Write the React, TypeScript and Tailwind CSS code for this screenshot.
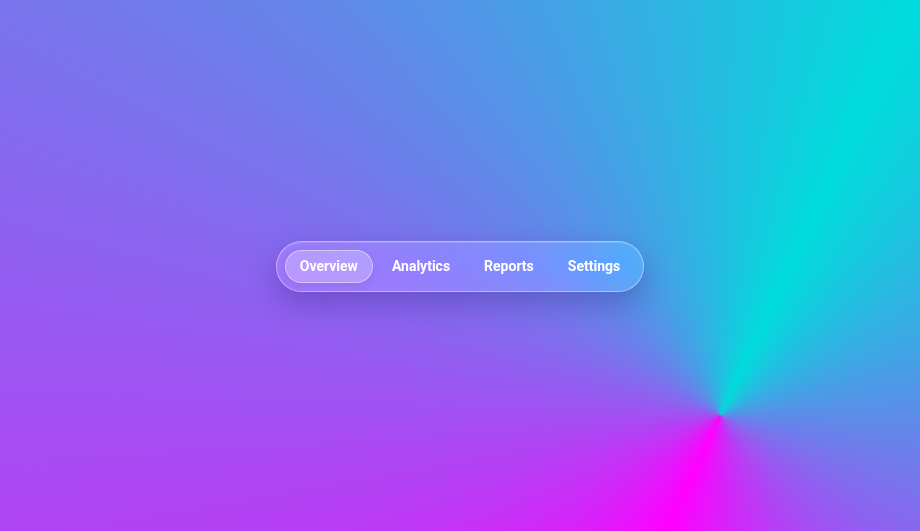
import { useState } from "react";

const tabs = ["Overview", "Analytics", "Reports", "Settings"];

const App = () => {
  const [active, setActive] = useState("Overview");

  return (
    <div
      className="h-[531px] w-full flex items-center justify-center bg-[conic-gradient(from_205deg_at_78.3%_78.2%,#ff00ff,#00dcdc,#ff00ff)]"
      style={{ fontFamily: "Roboto, Inter, 'Noto Sans', sans-serif" }}
    >
      {/* Glass nav */}
      <nav className="mt-px flex items-center gap-1 p-2 rounded-full border border-white/40 bg-white/15 backdrop-blur-md backdrop-saturate-150 shadow-[0_12px_28px_rgba(40,20,110,0.28),inset_0_1px_0_rgba(255,255,255,0.15)]">
        {tabs.map((tab) => (
          <button
            key={tab}
            onClick={() => setActive(tab)}
            className={`h-[33px] px-[14px] flex items-center rounded-full text-[14px] font-bold text-white border transition-colors ${
              active === tab
                ? "bg-white/25 border-white/45 shadow-[0_2px_8px_rgba(0,0,0,0.08)]"
                : "border-transparent hover:bg-white/10"
            }`}
          >
            {tab}
          </button>
        ))}
      </nav>
    </div>
  );
};

export default App;
